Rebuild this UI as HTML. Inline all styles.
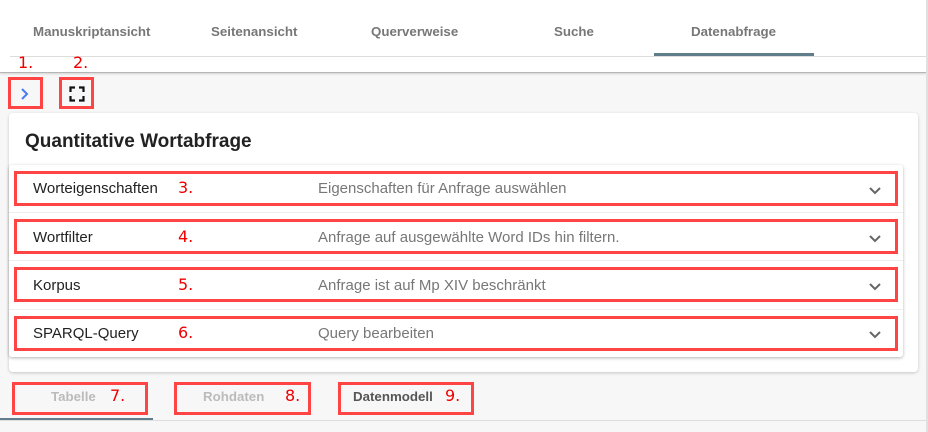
<!DOCTYPE html>
<html><head><meta charset="utf-8"><style>
*{box-sizing:border-box;margin:0;padding:0}
body{width:928px;height:432px;overflow:hidden;background:#f7f7f7;font-family:"Liberation Sans",sans-serif;position:relative}
.a{position:absolute}
.top{left:0;top:0;width:926px;height:73px;background:#fff;border-bottom:1px solid #b5b5b5;box-shadow:0 1px 2px rgba(0,0,0,.15)}
.tab{top:24px;font-size:13.3px;font-weight:bold;color:#777;text-align:center}
.red{border:3px solid #f44;}
.num{color:#e00;font-family:"DejaVu Sans","Liberation Sans",sans-serif;font-size:16px}
.card{left:9px;top:113px;width:909px;height:259px;background:#fff;border-radius:4px;box-shadow:0 1px 3px rgba(0,0,0,.2)}
.panel{left:9px;top:165px;width:894px;height:192px;background:#fff;box-shadow:0 1px 3px rgba(0,0,0,.3);border-radius:3px}
.row{left:14px;width:884px;height:35px}
.rt{font-size:15px;color:#222;left:33px}
.rd{font-size:15px;color:#777;left:318px}
</style></head><body>
<div class="a top"></div>
<div class="a" style="left:10px;top:56px;width:916px;height:1px;background:#ddd"></div>
<div class="a tab" style="left:33px">Manuskriptansicht</div>
<div class="a tab" style="left:211px">Seitenansicht</div>
<div class="a tab" style="left:371px">Querverweise</div>
<div class="a tab" style="left:554px">Suche</div>
<div class="a tab" style="left:691px">Datenabfrage</div>
<div class="a" style="left:654px;top:53px;width:160px;height:3px;background:#607d8b"></div>
<div class="a" style="left:926px;top:0;width:2px;height:432px;background:#e0e0e0"></div>
<div class="a num" style="left:18px;top:53px">1.</div>
<div class="a num" style="left:73px;top:53px">2.</div>
<div class="a red" style="left:8px;top:77px;width:35px;height:32px"></div>
<div class="a red" style="left:59px;top:77px;width:35px;height:32px"></div>
<svg class="a" style="left:18px;top:87px" width="12" height="14"><path d="M4 2l5 5-5 5" stroke="#4a7cf0" stroke-width="2" fill="none"/></svg>
<svg class="a" style="left:69px;top:86px" width="16" height="16" viewBox="0 0 16 16"><path d="M1.5 6V1.5H6M10 1.5h4.5V6M14.5 10v4.5H10M6 14.5H1.5V10" stroke="#111" stroke-width="2.2" fill="none"/></svg>
<div class="a card"></div>
<div class="a" style="left:25px;top:131px;font-size:19px;font-weight:bold;color:#222">Quantitative Wortabfrage</div>
<div class="a panel"></div>
<div class="a" style="left:9px;top:212px;width:894px;height:1px;background:#eee"></div>
<div class="a" style="left:9px;top:260px;width:894px;height:1px;background:#eee"></div>
<div class="a" style="left:9px;top:309px;width:894px;height:1px;background:#eee"></div>

<div class="a row red" style="top:171px"></div>
<div class="a rt" style="top:180px">Worteigenschaften</div><div class="a num" style="left:178px;top:178px">3.</div>
<div class="a rd" style="top:180px">Eigenschaften für Anfrage auswählen</div>

<div class="a row red" style="top:219px"></div>
<div class="a rt" style="top:229px">Wortfilter</div><div class="a num" style="left:178px;top:227px">4.</div>
<div class="a rd" style="top:229px">Anfrage auf ausgewählte Word IDs hin filtern.</div>

<div class="a row red" style="top:267px"></div>
<div class="a rt" style="top:277px">Korpus</div><div class="a num" style="left:178px;top:275px">5.</div>
<div class="a rd" style="top:277px">Anfrage ist auf Mp XIV beschränkt</div>

<div class="a row red" style="top:316px"></div>
<div class="a rt" style="top:325px">SPARQL-Query</div><div class="a num" style="left:178px;top:323px">6.</div>
<div class="a rd" style="top:325px">Query bearbeiten</div>

<svg class="a" style="left:868px;top:186px" width="14" height="10"><path d="M2 2l5 5 5-5" stroke="#666" stroke-width="2" fill="none"/></svg>
<svg class="a" style="left:868px;top:234px" width="14" height="10"><path d="M2 2l5 5 5-5" stroke="#666" stroke-width="2" fill="none"/></svg>
<svg class="a" style="left:868px;top:282px" width="14" height="10"><path d="M2 2l5 5 5-5" stroke="#666" stroke-width="2" fill="none"/></svg>
<svg class="a" style="left:868px;top:330px" width="14" height="10"><path d="M2 2l5 5 5-5" stroke="#666" stroke-width="2" fill="none"/></svg>

<div class="a" style="left:0;top:420px;width:926px;height:1px;background:#ddd"></div>
<div class="a" style="left:0;top:418px;width:153px;height:2px;background:#607d8b"></div>
<div class="a red" style="left:12px;top:382px;width:136px;height:33px"></div>
<div class="a red" style="left:174px;top:382px;width:137px;height:33px"></div>
<div class="a red" style="left:338px;top:382px;width:136px;height:33px"></div>
<div class="a" style="left:51px;top:389px;font-size:13.3px;font-weight:bold;color:#bbb">Tabelle</div><div class="a num" style="left:110px;top:386px">7.</div>
<div class="a" style="left:203px;top:389px;font-size:13.3px;font-weight:bold;color:#bbb">Rohdaten</div><div class="a num" style="left:285px;top:386px">8.</div>
<div class="a" style="left:353px;top:389px;font-size:13.3px;font-weight:bold;color:#555">Datenmodell</div><div class="a num" style="left:445px;top:386px">9.</div>
</body></html>
